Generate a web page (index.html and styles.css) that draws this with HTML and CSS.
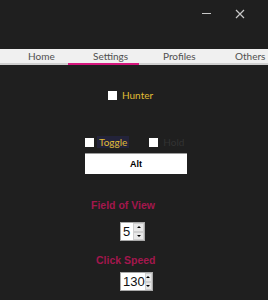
FILE: index.html
```html
<!DOCTYPE html>
<html>
<head>
<meta charset="utf-8">
<link rel="stylesheet" href="styles.css">
</head>
<body>
<div class="window">
  <div class="titlebar">
    <span class="min"></span>
    <svg class="close" width="10" height="10" viewBox="0 0 10 10"><path d="M1 1L9 9M9 1L1 9" stroke="#c8c8c8" stroke-width="1.2"/></svg>
  </div>
  <div class="tabs">
    <div class="tab t1">Home</div>
    <div class="tab t2 active">Settings</div>
    <div class="tab t3">Profiles</div>
    <div class="tab t4">Others</div>
  </div>
  <div class="content">
    <label class="check hunter"><span class="box"></span><span class="gold">Hunter</span></label>
    <div class="row">
      <label class="check"><span class="box"></span><span class="gold toggle">Toggle</span></label>
      <label class="check hold"><span class="box"></span><span class="dim">Hold</span></label>
    </div>
    <div class="keybtn">Alt</div>
    <div class="heading fov">Field of View</div>
    <div class="spin s1"><span class="val">5</span><span class="arrows"><span class="up"></span><span class="down"></span></span></div>
    <div class="heading cs">Click Speed</div>
    <div class="spin s2"><span class="val">130</span><span class="arrows"><span class="up"></span><span class="down"></span></span></div>
  </div>
</div>
</body>
</html>
```
FILE: styles.css
```css
html, body { margin: 0; padding: 0; background: #1f1f1f; }
.window { width: 268px; height: 300px; overflow: hidden; font-family: "Liberation Sans", Arial, sans-serif; }
.titlebar { height: 49px; display: flex; align-items: flex-start; justify-content: flex-end; }
.min { width: 9px; height: 1px; background: #c8c8c8; margin-top: 13px; margin-right: 24px; }
.close { margin-top: 9px; margin-right: 23px; }
.tabs { height: 14px; background: #f0f0f0; border-bottom: 2px solid #cfcfcf; display: flex; font-family: Lato, sans-serif; font-size: 10px; color: #4f4f4f; line-height: 14px; }
.tab { box-sizing: border-box; position: relative; white-space: nowrap; }
.t1 { width: 68px; padding-left: 28px; }
.t2 { width: 71px; padding-left: 25px; }
.t3 { width: 71px; padding-left: 24px; }
.t4 { flex: 1; padding-left: 25px; }
.active::after { content: ""; position: absolute; left: 0; right: 0; bottom: -2px; height: 2px; background: #d6177e; }
.content { display: flex; flex-direction: column; align-items: flex-start; padding-left: 85px; }
.check { display: flex; align-items: center; font-size: 10px; font-family: Lato, sans-serif; }
.box { width: 9px; height: 9px; background: #fff; margin-right: 5px; }
.gold { color: #e0bd35; }
.dim { color: #333; }
.hunter { margin-top: 24px; margin-left: 23px; }
.row { display: flex; margin-top: 35px; }
.toggle { background: #23233a; padding: 0 2px; margin-left: -2px; }
.hold { margin-left: 20px; }
.keybtn { width: 102px; height: 21px; margin-top: 5px; background: #fff; border-top: 1px solid #9a9a9a; box-sizing: border-box; font-size: 9px; font-weight: bold; color: #000; display: flex; align-items: center; justify-content: center; }
.heading { color: #a3174d; font-weight: bold; font-size: 10.5px; }
.fov { margin-top: 25px; margin-left: 6px; }
.cs { margin-top: 13px; margin-left: 11px; }
.spin { display: flex; background: #fff; height: 19px; margin-top: 11px; box-sizing: border-box; border: 1px solid #aaa; margin-left: 35px; }
.s1 { width: 25px; }
.s2 { width: 33px; margin-top: 6px; }
.val { flex: 1; font-size: 13px; line-height: 17px; padding-left: 2px; color: #111; font-family: "Liberation Sans", sans-serif; }
.arrows { width: 11px; display: flex; flex-direction: column; background: #e8e8e8; }
.up, .down { flex: 1; display: flex; align-items: center; justify-content: center; border: 1px solid #cfcfcf; }
.up::before { content: ""; border-left: 2px solid transparent; border-right: 2px solid transparent; border-bottom: 2px solid #000; }
.down::before { content: ""; border-left: 2px solid transparent; border-right: 2px solid transparent; border-top: 2px solid #000; }
```
